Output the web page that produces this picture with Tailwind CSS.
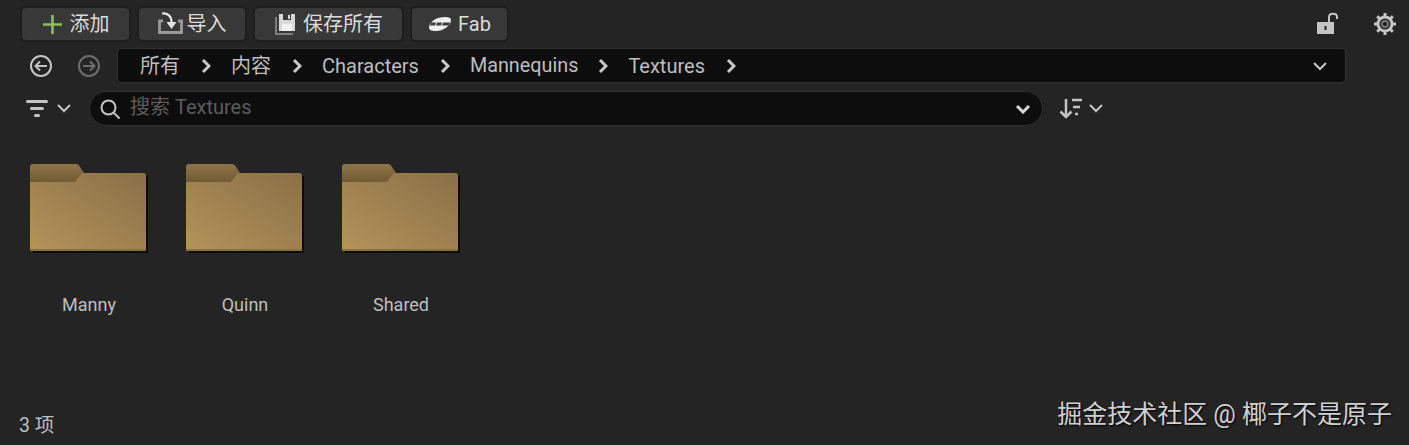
<!DOCTYPE html>
<html lang="en">
<head>
    <meta charset="UTF-8">
    <title>Content Browser</title>
    <script src="https://cdn.jsdelivr.net/npm/@tailwindcss/browser@4"></script>
</head>
<body class="bg-[#242424] text-[#bebebe] font-['Roboto','Noto_Sans_CJK_SC',sans-serif]">
<div class="h-[445px] w-[1409px] overflow-hidden flex flex-col relative">

    <!-- Toolbar -->
    <div class="flex items-center h-[34px] mt-[7px] pl-[20px] pr-[12px]">
        <div class="w-[111px] h-[36px] rounded-md bg-[#383838] border-2 border-[#1e1e1e] flex items-center justify-center gap-[7px] text-[#dcdcdc] text-[20px]">
            <svg width="21" height="21" viewBox="0 0 21 21"><path d="M10.500 1v19M1 10.500h19" stroke="#8cc152" stroke-width="2.600"/></svg>
            <span>添加</span>
        </div>
        <div class="w-[110px] h-[36px] ml-[6px] rounded-md bg-[#383838] border-2 border-[#1e1e1e] flex items-center justify-center gap-[4px] text-[#dcdcdc] text-[20px]">
            <svg width="25" height="24" viewBox="0 0 25 24" fill="none"><path d="M5 9H1.500v11.500h22V9H20" stroke="#9a9a9a" stroke-width="2.800"/><path d="M4 1.500c6-.5 9.500 2.500 9.500 8.500" stroke="#e4e4e4" stroke-width="2.200"/><path d="M8.500 10h10L13.500 17z" fill="#e4e4e4"/></svg>
            <span>导入</span>
        </div>
        <div class="w-[151px] h-[36px] ml-[6px] rounded-md bg-[#383838] border-2 border-[#1e1e1e] flex items-center justify-center gap-[7px] text-[#dcdcdc] text-[20px]">
            <svg width="22" height="24" viewBox="0 0 22 24"><path d="M1 5h2v16h16v2H1z" fill="#7e7e7e"/><path d="M5 2h16v17H5z" fill="#d8d8d8"/><path d="M9 2h8v6H9z" fill="#383838"/><path d="M14 3h2v4h-2z" fill="#d8d8d8"/><path d="M8 12h10v7H8z" fill="#f0f0f0"/></svg>
            <span>保存所有</span>
        </div>
        <div class="w-[99px] h-[36px] ml-[6px] rounded-md bg-[#383838] border-2 border-[#1e1e1e] flex items-center justify-center gap-[6px] text-[#dcdcdc] text-[20px]">
            <svg width="24" height="16" viewBox="0 0 24 16"><path d="M1 11C2 5 9 1 17 1c4 0 6 1 6 3 0 6-8 11-15 11C3 15 1 14 1 11z" fill="#eeeeee"/><path d="M3 6.500h5l-1 3H2zM9 6.500h5l-1 3H8zM15 6.500h7l-1 3h-7z" fill="#3a3a3a"/></svg>
            <span>Fab</span>
        </div>
        <div class="ml-auto flex items-center gap-[34px]">
            <svg width="22" height="24" viewBox="0 0 22 24"><path d="M0 10h17v12H0z" fill="#c4c4c4"/><path d="M7.500 14h2v4h-2z" fill="#242424"/><path d="M12 10V5c0-4.500 8-4.500 8 0v2" fill="none" stroke="#c4c4c4" stroke-width="2"/></svg>
            <svg width="24" height="24" viewBox="0 0 24 24" fill="none"><circle cx="12" cy="12" r="7" stroke="#c4c4c4" stroke-width="3"/><circle cx="12" cy="12" r="3" stroke="#8a8a8a" stroke-width="1.500"/><path d="M12 1v4M12 19v4M1 12h4M19 12h4M4.200 4.200l2.900 2.900M16.900 16.900l2.900 2.900M4.200 19.800l2.900-2.900M16.900 7.100l2.900-2.900" stroke="#c4c4c4" stroke-width="3"/></svg>
        </div>
    </div>

    <!-- Path row -->
    <div class="flex items-center h-[35px] mt-[7px]">
        <div class="w-[117px] flex items-center pl-[30px] gap-[26px]">
            <svg width="22" height="22" viewBox="0 0 22 22" fill="none" stroke="#c4c4c4" stroke-width="2"><circle cx="11" cy="11" r="10"/><path d="M17 11H6M10 6.500 5.500 11l4.500 4.500"/></svg>
            <svg width="22" height="22" viewBox="0 0 22 22" fill="none" stroke="#6e6e6e" stroke-width="2"><circle cx="11" cy="11" r="10"/><path d="M5 11h11M12 6.500l4.500 4.500-4.500 4.500"/></svg>
        </div>
        <div class="w-[1229px] h-[35px] rounded-[4px] bg-[#0d0d0d] border border-[#303030] flex items-center pl-[22px] pr-[17px] text-[20px]">
            <span>所有</span>
            <svg class="ml-[21px] mr-[20px]" width="10" height="16" viewBox="0 0 10 16" fill="none" stroke="#c8c8c8" stroke-width="3"><path d="m2 2 6 6-6 6"/></svg>
            <span>内容</span>
            <svg class="ml-[21px] mr-[20px]" width="10" height="16" viewBox="0 0 10 16" fill="none" stroke="#c8c8c8" stroke-width="3"><path d="m2 2 6 6-6 6"/></svg>
            <span>Characters</span>
            <svg class="ml-[21px] mr-[20px]" width="10" height="16" viewBox="0 0 10 16" fill="none" stroke="#c8c8c8" stroke-width="3"><path d="m2 2 6 6-6 6"/></svg>
            <span class="text-[19.8px]">Mannequins</span>
            <svg class="ml-[20px] mr-[20px]" width="10" height="16" viewBox="0 0 10 16" fill="none" stroke="#c8c8c8" stroke-width="3"><path d="m2 2 6 6-6 6"/></svg>
            <span>Textures</span>
            <svg class="ml-[21px]" width="10" height="16" viewBox="0 0 10 16" fill="none" stroke="#c8c8c8" stroke-width="3"><path d="m2 2 6 6-6 6"/></svg>
            <svg class="ml-auto" width="16" height="10" viewBox="0 0 16 10" fill="none" stroke="#c8c8c8" stroke-width="2"><path d="m2 2 6 6 6-6"/></svg>
        </div>
    </div>

    <!-- Filter and search row -->
    <div class="flex items-center h-[35px] mt-[8px]">
        <div class="w-[89px] flex items-center pl-[26px] gap-[9px]">
            <svg width="22" height="18" viewBox="0 0 22 18" fill="#c4c4c4"><rect width="22" height="3" rx="1.500"/><rect x="4" y="7" width="14" height="3" rx="1.500"/><rect x="8" y="14" width="6" height="3" rx="1.500"/></svg>
            <svg width="14" height="9" viewBox="0 0 14 9" fill="none" stroke="#c4c4c4" stroke-width="2"><path d="m1 1 6 6 6-6"/></svg>
        </div>
        <div class="w-[954px] h-[35px] rounded-full bg-[#0d0d0d] border border-[#303030] flex items-center pl-[9px] pr-[11px]">
            <svg width="22" height="22" viewBox="0 0 22 22" fill="none" stroke="#c4c4c4" stroke-width="2"><circle cx="9.500" cy="9.500" r="7"/><path d="m14.500 14.500 6 6"/></svg>
            <span class="ml-[9px] pb-[4px] text-[20px] text-[#5c5c5c]">搜索 Textures</span>
            <svg class="ml-auto" width="16" height="10" viewBox="0 0 16 10" fill="none" stroke="#d8d8d8" stroke-width="3"><path d="m2 2 6 6 6-6"/></svg>
        </div>
        <div class="ml-[16px] flex items-center gap-[6px]">
            <svg width="24" height="22" viewBox="0 0 24 22" fill="none" stroke="#c4c4c4" stroke-width="2.500"><path d="M7 1v18M1.500 13.500 7 19l5.500-5.500"/><path d="M13 2h10M14 9h7M16 16h3"/></svg>
            <svg width="14" height="9" viewBox="0 0 14 9" fill="none" stroke="#c4c4c4" stroke-width="2"><path d="m1 1 6 6 6-6"/></svg>
        </div>
    </div>

    <!-- Folder grid -->
    <div class="flex mt-[38px] pl-[11px]">
        <div class="w-[156px] flex flex-col items-center">
            <svg width="118" height="90" viewBox="0 0 118 90">
                <defs>
                    <linearGradient id="folder" x1="0" y1="1" x2="1" y2="0"><stop offset="0" stop-color="#b4935a"/><stop offset="1" stop-color="#8a7047"/></linearGradient>
                    <linearGradient id="tab" x1="0" y1="0" x2="0" y2="1"><stop offset="0" stop-color="#8f7447"/><stop offset="1" stop-color="#6f5932"/></linearGradient>
                </defs>
                <path d="M3 12h115v77H3z" fill="#0c0c0c"/>
                <path d="M0 3a3 3 0 0 1 3-3h42c3 0 4 1 5 3l4 6v10H0z" fill="url(#tab)"/>
                <path d="M0 18h45l7-9h61c2 0 3 1 3 3v74H0z" fill="url(#folder)"/>
                <path d="M0 85h116v2H0z" fill="#88703f"/>
            </svg>
            <span class="mt-[39px] text-[18px] leading-[24px]">Manny</span>
        </div>
        <div class="w-[156px] flex flex-col items-center">
            <svg width="118" height="90" viewBox="0 0 118 90">
                <path d="M3 12h115v77H3z" fill="#0c0c0c"/>
                <path d="M0 3a3 3 0 0 1 3-3h42c3 0 4 1 5 3l4 6v10H0z" fill="url(#tab)"/>
                <path d="M0 18h45l7-9h61c2 0 3 1 3 3v74H0z" fill="url(#folder)"/>
                <path d="M0 85h116v2H0z" fill="#88703f"/>
            </svg>
            <span class="mt-[39px] text-[18px] leading-[24px]">Quinn</span>
        </div>
        <div class="w-[156px] flex flex-col items-center">
            <svg width="118" height="90" viewBox="0 0 118 90">
                <path d="M3 12h115v77H3z" fill="#0c0c0c"/>
                <path d="M0 3a3 3 0 0 1 3-3h42c3 0 4 1 5 3l4 6v10H0z" fill="url(#tab)"/>
                <path d="M0 18h45l7-9h61c2 0 3 1 3 3v74H0z" fill="url(#folder)"/>
                <path d="M0 85h116v2H0z" fill="#88703f"/>
            </svg>
            <span class="mt-[39px] text-[18px] leading-[24px]">Shared</span>
        </div>
    </div>

    <!-- Status bar -->
    <div class="mt-auto flex items-end justify-between pl-[19px] pr-[17px] pb-[6px]">
        <span class="text-[19.5px] leading-[26px]">3 项</span>
        <span class="mb-[7px] text-[25px] leading-[34px] text-[#d0d0d0] [text-shadow:1px_1px_2px_#000]">掘金技术社区 @ 椰子不是原子</span>
    </div>
</div>
</body>
</html>
